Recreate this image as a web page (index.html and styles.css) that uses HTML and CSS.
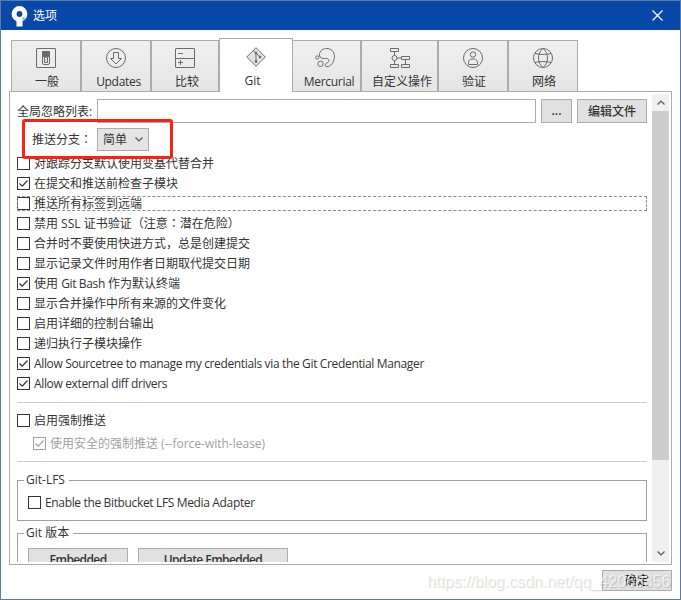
FILE: index.html
```html
<!DOCTYPE html>
<html lang="zh-CN">
<head>
<meta charset="utf-8">
<title>选项</title>
<link rel="stylesheet" href="styles.css">
</head>
<body>
<div class="window">
  <header class="titlebar">
    <svg class="logo" width="17" height="21" viewBox="0 0 17 21"><circle cx="8.500" cy="8" r="5.400" fill="none" stroke="#fff" stroke-width="5"/><path d="M5.500 14h6v6.500h-6z" fill="#fff"/><path d="M11.500 10.500l3 2-3 2.500z" fill="#9db5dd"/></svg>
    <span class="title">选项</span>
    <svg class="close" width="11" height="11" viewBox="0 0 11 11"><path d="M.5.5l10 10M10.500.5l-10 10" stroke="#fff" stroke-width="1.200"/></svg>
  </header>
  <nav class="tabs">
    <div class="tab general"><svg viewBox="0 0 20 20"><rect x=".5" y=".5" width="19" height="19" rx=".5"/><rect x="6.500" y="3.500" width="7" height="13" rx="1.500"/><path class="solid" d="M6.500 3.500h7v5h-7z"/><path class="soft" d="M8.500 9v5.500h3V9z"/></svg><span>一般</span></div>
    <div class="tab updates"><svg viewBox="0 0 20 20"><circle cx="10" cy="10" r="9.500"/><path d="M7.500 4.500h5v6h3L10 16l-5.500-5.500h3z"/></svg><span>Updates</span></div>
    <div class="tab compare"><svg viewBox="0 0 20 20"><rect x=".5" y=".5" width="19" height="19" rx=".5"/><path d="M.5 10.500h19M3 5.500h5M3 14.500h5M5.500 12v5"/></svg><span>比较</span></div>
    <div class="tab active"><svg viewBox="0 0 20 20"><path class="soft" d="M10 .7L19.300 10 10 19.300.7 10z"/><path d="M7 3.500l3 2.500 4.500 4.500M10 6v9"/><circle class="solid" cx="10" cy="6" r="1"/><circle class="solid" cx="14" cy="10" r="1"/><circle class="solid" cx="10" cy="14.500" r="1"/></svg><span>Git</span></div>
    <div class="tab mercurial"><svg viewBox="0 0 20 20"><path d="M4.500 5.500C6 1 10 .2 13 .6c4.500.7 6.800 4.500 6.400 8.900-.5 5-3.800 9-7.400 9.200-2.500.1-2.300-2.600.2-3.900 3.300-1.700 1.600-4.800-1.700-4.300C7.500 11 3.500 9.500 4.500 5.500z"/><circle cx="5.500" cy="15.800" r="2.700"/><circle cx="2.200" cy="9.500" r="1.600"/></svg><span>Mercurial</span></div>
    <div class="tab custom"><svg viewBox="0 0 20 20"><path d="M.5.500h8v3h-8zM.5 16.500h8v3h-8zM11.500 8.500h8v3h-8zM11.500 16.500h8v3h-8zM4.500 3.500v4M4.500 12.500v4M7 10h4.500M15.500 11.500v5"/><circle cx="4.500" cy="10" r="2.500"/></svg><span>自定义操作</span></div>
    <div class="tab auth"><svg viewBox="0 0 20 20"><circle cx="10" cy="10" r="9.500"/><circle cx="10" cy="6.500" r="2.700"/><path d="M5.500 16.500v-2c0-2 1.500-3.500 3.500-3.500h2c2 0 3.500 1.500 3.500 3.500v2z"/></svg><span>验证</span></div>
    <div class="tab net"><svg viewBox="0 0 20 20"><circle cx="10" cy="10" r="9.500"/><path d="M10 .5C4 5 4 15 10 19.500M10 .5c6 4.500 6 14.500 0 19M2 5.500c5 1.300 11 1.300 16 0M2 14.500c5-1.300 11-1.300 16 0"/></svg><span>网络</span></div>
  </nav>
  <main class="panel">
    <div class="content">
      <div class="ignore-row"><label>全局忽略列表:</label><div class="input"></div><div class="btn dots">...</div><div class="btn edit">编辑文件</div></div>
      <div class="push-row"><label>推送分支<span class="colon" lang="zh-TW">：</span></label><div class="select">简单<svg width="8" height="5" viewBox="0 0 8 5"><path d="M.5.500L4 4 7.500.500"/></svg></div><div class="highlight"></div></div>
      <div class="checks">
        <div class="check"><i class="box"></i><span>对跟踪分支默认使用变基代替合并</span></div>
        <div class="check"><i class="box"><svg viewBox="0 0 11 11"><path d="M1.500 5.500l2.700 2.700 5.300-5.700"/></svg></i><span>在提交和推送前检查子模块</span></div>
        <div class="check focused"><i class="box"></i><span>推送所有标签到远端</span></div>
        <div class="check"><i class="box"></i><span>禁用 SSL 证书验证（注意<span class="colon" lang="zh-TW">：</span>潜在危险）</span></div>
        <div class="check"><i class="box"></i><span>合并时不要使用快进方式，总是创建提交</span></div>
        <div class="check"><i class="box"></i><span>显示记录文件时用作者日期取代提交日期</span></div>
        <div class="check"><i class="box"><svg viewBox="0 0 11 11"><path d="M1.500 5.500l2.700 2.700 5.300-5.700"/></svg></i><span>使用 <span class="latin">Git Bash</span> 作为默认终端</span></div>
        <div class="check"><i class="box"></i><span>显示合并操作中所有来源的文件变化</span></div>
        <div class="check"><i class="box"></i><span>启用详细的控制台输出</span></div>
        <div class="check"><i class="box"></i><span>递归执行子模块操作</span></div>
        <div class="check"><i class="box"><svg viewBox="0 0 11 11"><path d="M1.500 5.500l2.700 2.700 5.300-5.700"/></svg></i><span class="latin">Allow Sourcetree to manage my credentials via the Git Credential Manager</span></div>
        <div class="check"><i class="box"><svg viewBox="0 0 11 11"><path d="M1.500 5.500l2.700 2.700 5.300-5.700"/></svg></i><span class="latin">Allow external diff drivers</span></div>
      </div>
      <div class="force">
        <div class="check"><i class="box"></i><span>启用强制推送</span></div>
        <div class="check disabled"><i class="box"><svg viewBox="0 0 11 11"><path d="M1.500 5.500l2.700 2.700 5.300-5.700"/></svg></i><span>使用安全的强制推送 (--force-with-lease)</span></div>
      </div>
      <section class="group lfs"><h2>Git-LFS</h2><div class="check"><i class="box"></i><span class="latin">Enable the Bitbucket LFS Media Adapter</span></div></section>
      <section class="group version"><h2>Git 版本</h2><div class="buttons"><div class="btn embedded">Embedded</div><div class="btn update">Update Embedded</div></div></section>
    </div>
    <div class="scrollbar"><svg width="8" height="5" viewBox="0 0 8 5"><path d="M.5 4.500L4 1l3.500 3.500"/></svg><div class="thumb"></div><svg class="down" width="8" height="5" viewBox="0 0 8 5"><path d="M.5.500L4 4 7.500.500"/></svg></div>
  </main>
  <footer class="footer"><div class="btn ok">确定</div></footer>
  <div class="watermark">https://blog.csdn.net/qq_42068356</div>
</div>
</body>
</html>
```
FILE: styles.css
```css
* { box-sizing: border-box; }
body { margin: 0; font: 12px/16px "Open Sans", "Noto Sans CJK SC", sans-serif; color: #333; }
.window { position: relative; width: 681px; height: 600px; border: 1px solid #5b7ba0; background: #fff; overflow: hidden; }
.titlebar { height: 29px; background: #0848a8; display: flex; align-items: center; padding: 0 17px 0 10px; color: #fff; }
.logo { margin: 1px 5px 0 0; }
.close { margin-left: auto; }
.tabs { height: 53px; margin: 8px 0 0 10px; display: flex; align-items: flex-end; }
.tab { width: 70px; height: 51px; border: 1px solid #acacac; border-bottom: 0; background: linear-gradient(#f0f0f0, #e5e5e5); display: flex; flex-direction: column; align-items: center; padding-top: 7px; }
.tab svg { width: 20px; height: 20px; fill: none; stroke: #6b6b6b; stroke-width: 1; flex: none; }
.tab svg .solid { fill: #6b6b6b; }
.tab svg .soft { fill: #e4e4e4; }
.tab span { margin-top: 6px; white-space: nowrap; }
.tab.general span { padding-left: 2px; }
.tab.updates span { padding-left: 5px; letter-spacing: -.3px; }
.tab.compare { width: 68px; }
.tab.compare span { padding-left: 4px; }
.tab.active { width: 74px; height: 54px; margin-bottom: -1px; background: #fff; position: relative; padding-top: 8px; }
.tab.active span { margin-top: 6px; padding-right: 7px; }
.tab.mercurial { width: 68px; border-left: 0; }
.tab.mercurial svg { margin-right: 3px; }
.tab.mercurial span { padding-left: 5px; letter-spacing: -.3px; }
.tab.custom { width: 77px; }
.tab.custom span { padding-left: 5px; }
.tab.auth span, .tab.net span { padding-left: 2px; }
.panel { height: 474px; margin: 0 8px; border: 1px solid #acacac; padding: 2px; display: flex; }
.content { flex: 1; height: 468px; overflow: hidden; padding: 5px 5px 0; }
.ignore-row { display: flex; height: 24px; align-items: center; }
.ignore-row label { width: 80px; padding-top: 2px; white-space: nowrap; }
.input { width: 439px; height: 24px; border: 1px solid #acacac; }
.btn { height: 24px; border: 1px solid #acacac; background: #e1e1e1; display: flex; align-items: center; justify-content: center; font-weight: 600; white-space: nowrap; }
.dots { width: 31px; margin: 0 5px; }
.edit { width: 70px; font-weight: 500; padding-top: 1px; }
.push-row { position: relative; display: flex; align-items: center; height: 23px; margin-top: 5px; padding-left: 15px; }
.push-row label { width: 65px; }
.colon { font-family: "Noto Sans CJK TC", sans-serif; line-height: 1; }
.select { width: 52px; height: 23px; border: 1px solid #acacac; background: #e5e5e5; display: flex; align-items: center; justify-content: space-between; padding: 0 5px; }
.select svg, .scrollbar svg { fill: none; stroke: #555; stroke-width: 1.200; }
.highlight { position: absolute; left: 5px; top: -9px; width: 151px; height: 40px; border: 3px solid #ff2012; border-radius: 3px; }
.checks { padding-top: 5px; height: 246px; }
.check { display: flex; align-items: center; height: 15px; margin-bottom: 5px; white-space: nowrap; }
.box { width: 13px; height: 13px; border: 1px solid #333; flex: none; margin-right: 4px; }
.box svg { display: block; width: 11px; height: 11px; fill: none; stroke: #333; stroke-width: 1.200; }
.latin { letter-spacing: -.35px; }
.focused { outline: 1px dashed #8b8b8b; outline-offset: -1px; }
.force { border-top: 1px solid #c8c8c8; border-bottom: 1px solid #c8c8c8; height: 60px; margin-top: 5px; padding-top: 10px; }
.force .check { margin-bottom: 8px; }
.force .disabled { margin-left: 16px; color: #a0a0a0; }
.disabled .box { border-color: #a0a0a0; }
.disabled .box svg { stroke: #a0a0a0; }
.group { border: 1px solid #a0a0a0; height: 41px; margin-top: 18px; padding: 0 10px; }
.group h2 { font: inherit; width: max-content; height: 16px; margin: -9px 0 0 -4px; padding: 0 4px 0 2px; background: #fff; }
.lfs .check { margin-top: 7px; }
.version { margin-top: 12px; height: 60px; }
.buttons { display: flex; gap: 10px; margin-top: 7px; letter-spacing: -.6px; }
.embedded { width: 100px; }
.update { width: 150px; }
.scrollbar { width: 17px; height: 468px; background: #f0f0f0; display: flex; flex-direction: column; align-items: center; padding-top: 6px; }
.thumb { width: 17px; height: 349px; margin-top: 6px; background: #cdcdcd; }
.down { margin-top: 91px; }
.footer { display: flex; justify-content: flex-end; padding: 5px 8px 0; }
.ok { width: 70px; height: 21px; font-weight: 400; color: #111; }
.watermark { position: absolute; left: 426px; top: 571px; font: 16px/20px "Liberation Sans", sans-serif; letter-spacing: -.07px; color: rgba(255,255,255,.65); text-shadow: 1px 1px 1px rgba(0,0,0,.17); white-space: nowrap; }
```
